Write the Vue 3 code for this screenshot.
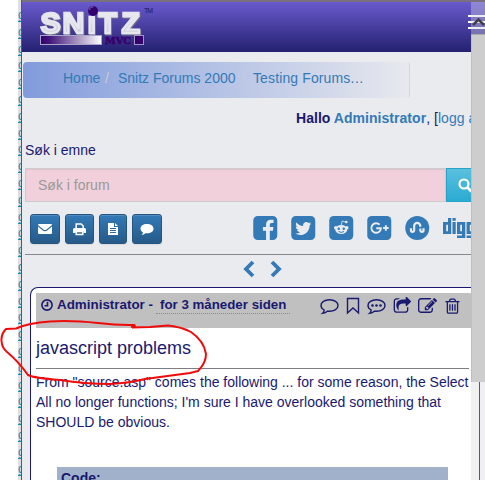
<script setup>
const gutterMarks = Array.from({ length: 29 }, (_, i) => i)
const ICON = {
  facebook: 'M1376 128q119 0 203.500 84.500t84.500 203.500v960q0 119-84.500 203.500t-203.500 84.500h-188v-595h199l30-232h-229v-148q0-56 23.500-84t91.500-28l122-1v-207q-63-9-178-9-136 0-217.500 80t-81.500 226v171h-200v232h200v595h-532q-119 0-203.500-84.500t-84.500-203.500v-960q0-119 84.500-203.500t203.500-84.500h960z',
  twitter: 'M1408 610q-56 25-121 34 68-40 93-117-65 38-134 51-61-66-153-66-87 0-148.500 61.500t-61.500 148.500q0 29 5 48-129-7-242-65t-192-155q-29 50-29 106 0 114 91 175-47-1-100-26v2q0 75 50 133.500t123 72.500q-29 8-51 8-13 0-39-4 21 63 74.500 104t121.500 42q-116 90-261 90-26 0-50-3 148 94 322 94 112 0 210-35.500t168-95 120.500-137 75-162 24.500-168.500q0-18-1-27 63-45 105-109zm256-194v960q0 119-84.500 203.500t-203.500 84.500h-960q-119 0-203.500-84.500t-84.500-203.500v-960q0-119 84.500-203.500t203.500-84.500h960q119 0 203.500 84.500t84.500 203.500z',
  share: 'M1472 989v259q0 119-84.500 203.500t-203.500 84.500h-832q-119 0-203.500-84.500t-84.500-203.500v-832q0-119 84.500-203.500t203.500-84.500h255q13 0 22.500 9.500t9.500 22.500q0 27-26 32-77 26-133 60-10 4-16 4h-112q-66 0-113 47t-47 113v832q0 66 47 113t113 47h832q66 0 113-47t47-113v-214q0-19 18-29 28-13 54-37 16-16 35-8 21 9 21 29zm237-496l-384 384q-18 19-45 19-12 0-25-5-39-17-39-59v-192h-160q-323 0-438 131-119 137-74 473 3 23-20 34-8 2-12 2-16 0-26-13-10-14-21-31t-39.500-68.500-49.500-99.500-38.500-114-17.500-122q0-49 3.500-91t14-90 28-88 47-81.500 68.500-74 94.500-61.500 124.500-48.500 159.500-30.500 196.500-11h160v-192q0-42 39-59 13-5 25-5 26 0 45 19l384 384q19 19 19 45t-19 45z',
  edit: 'M888 1184l116-116-152-152-116 116v56h96v96h56zm440-720q-16-16-33 1l-350 350q-17 17-1 33t33-1l350-350q17-17 1-33zm80 594v190q0 119-84.500 203.500t-203.500 84.500h-832q-119 0-203.500-84.500t-84.500-203.500v-832q0-119 84.500-203.500t203.500-84.500h832q63 0 117 25 15 7 18 23 3 17-9 29l-49 49q-14 14-32 8-23-6-45-6h-832q-66 0-113 47t-47 113v832q0 66 47 113t113 47h832q66 0 113-47t47-113v-126q0-13 9-22l64-64q15-15 35-7t20 29zm-96-738l288 288-672 672h-288v-288zm444 132l-92 92-288-288 92-92q28-28 68-28t68 28l152 152q28 28 28 68t-28 68z',
  trash: 'M704 736v576q0 14-9 23t-23 9h-64q-14 0-23-9t-9-23v-576q0-14 9-23t23-9h64q14 0 23 9t9 23zm256 0v576q0 14-9 23t-23 9h-64q-14 0-23-9t-9-23v-576q0-14 9-23t23-9h64q14 0 23 9t9 23zm256 0v576q0 14-9 23t-23 9h-64q-14 0-23-9t-9-23v-576q0-14 9-23t23-9h64q14 0 23 9t9 23zm128 724v-948h-896v948q0 22 7 40.500t14.500 27 10.500 8.500h832q3 0 10.500-8.500t14.500-27 7-40.500zm-672-1076h448l-48-117q-7-9-17-11h-317q-10 2-17 11zm928 32v64q0 14-9 23t-23 9h-96v948q0 83-47 143.500t-113 60.500h-832q-66 0-113-58.500t-47-141.500v-952h-96q-14 0-23-9t-9-23v-64q0-14 9-23t23-9h309l70-167q15-37 54-63t79-26h320q40 0 79 26t54 63l70 167h309q14 0 23 9t9 23z'
}
</script>

<template>
  <div class="screen">
    <div class="gutter"><span v-for="n in gutterMarks" :key="n">g</span></div>

    <main class="page">
      <header class="banner">
        <svg class="logo" width="120" height="44" viewBox="0 0 120 44">
          <defs>
            <linearGradient id="silver" x1="0" y1="0" x2="0" y2="1">
              <stop offset="0" stop-color="#fff" /><stop offset=".55" stop-color="#dcdce4" /><stop offset="1" stop-color="#c4c4cf" />
            </linearGradient>
            <linearGradient id="bar"><stop offset="0" stop-color="#33006b" /><stop offset=".15" stop-color="#42177a" /><stop offset="1" stop-color="#fff" /></linearGradient>
            <filter id="drop" x="-10%" y="-10%" width="120%" height="130%"><feDropShadow dx="1" dy="1.200" stdDeviation=".3" flood-color="#6f6c85" /></filter>
          </defs>
          <text class="logo-word" x="1.500 23.500 48.500 59.500 82.500" y="30.500" fill="url(#silver)" filter="url(#drop)">SNıTZ</text>
          <circle cx="54" cy="9" r="5" fill="#34006b" />
          <path d="M50.500 8a3.500 3.500 0 0 1 4-3" fill="none" stroke="#8573b5" stroke-width="1" />
          <rect x="1.500" y="33.500" width="61" height="9" fill="url(#bar)" stroke="#aaa3c9" />
          <text x="66" y="42" textLength="26" lengthAdjust="spacingAndGlyphs" class="logo-mvc">MVC</text>
          <rect x="95.500" y="33.500" width="9" height="9" fill="#36006b" stroke="#9d96c1" />
          <text x="105" y="11" textLength="9" class="logo-tm">TM</text>
        </svg>
        <div class="burger"><i></i><i></i><i></i></div>
      </header>

      <nav class="crumbs">
        <a class="c1">Home</a><span class="s1">/</span><a class="c2">Snitz Forums 2000</a><span class="s2">/</span><a class="c3">Testing Forums</a><span class="dots">...</span>
      </nav>

      <p class="hello"><b>Hallo <a>Administrator</a></b>, [<a>logg av</a>]</p>
      <label class="label">Søk i emne</label>
      <div class="search">
        <div class="field">Søk i forum</div>
        <button class="go">
          <svg width="15" height="15" viewBox="0 0 15 15" fill="none" stroke="#fff"><circle cx="6" cy="6" r="4.500" stroke-width="2.200" /><path d="M9.500 9.500l4 4" stroke-width="2.800" /></svg>
        </button>
      </div>

      <div class="tools">
        <button class="tool w30">
          <svg width="14" height="14" viewBox="0 0 14 14" fill="#fff"><path d="M1 2h12q1 0 1 1L8.500 7.500Q7 8.700 5.500 7.500L0 3q0-1 1-1zM0 4.600L4.500 8.300Q7 10 9.500 8.300L14 4.600V11q0 1-1 1H1q-1 0-1-1z" /></svg>
        </button>
        <button class="tool w29">
          <svg width="13" height="14" viewBox="0 0 13 14"><path d="M3.200 7V2h5l2 2v3" fill="none" stroke="#fff" stroke-width="1.500" /><path d="M1.500 6h10Q13 6 13 7.500V11h-2.500V9.500h-8V11H0V7.500Q0 6 1.500 6z" fill="#fff" /><path d="M3.200 9.500h6.600v3H3.200z" fill="none" stroke="#fff" stroke-width="1.500" /></svg>
        </button>
        <button class="tool w28">
          <svg width="12" height="14" viewBox="0 0 12 14"><path d="M1 1h6v4h4v8H1z" fill="#fff" /><path d="M8 1l3 3H8z" fill="#fff" /><path d="M3 6.500h6M3 8.500h6M3 10.500h6" stroke="#2d6ba4" /></svg>
        </button>
        <button class="tool w30">
          <svg width="14" height="14" viewBox="0 0 14 14"><path d="M7 2c3.900 0 6.500 2 6.500 4.700S10.900 11.300 7 11.300q-.8 0-1.500-.1Q3.500 13 1.500 13 3 11.800 2.900 10.300 .5 9 .5 6.700C.5 4 3.100 2 7 2z" fill="#fff" /></svg>
        </button>
        <div class="social">
          <svg viewBox="128 128 1536 1536"><path :d="ICON.facebook" /></svg>
          <svg viewBox="128 128 1536 1536"><path :d="ICON.twitter" /></svg>
          <svg viewBox="0 0 24 24"><rect width="24" height="24" rx="4.500" /><g fill="#e9ebef"><ellipse cx="12" cy="13.500" rx="6" ry="4.500" /><circle cx="6.400" cy="11.700" r="1.700" /><circle cx="17.600" cy="11.700" r="1.700" /><circle cx="17" cy="6" r="1.300" /></g><path d="M12 9l1-4 3 1" fill="none" stroke="#e9ebef" stroke-width=".8" /><circle cx="9.500" cy="12.700" r="1.200" /><circle cx="14.500" cy="12.700" r="1.200" /><path d="M9.300 15.500q2.700 1.800 5.400 0" fill="none" stroke="#347ab7" /></svg>
          <svg viewBox="0 0 24 24"><rect width="24" height="24" rx="4.500" /><path d="M12.400 8.700A4.800 4.800 0 1 0 13.700 12.300H9M15.800 12h5.600M18.600 9.200v5.600" fill="none" stroke="#e9ebef" stroke-width="1.900" /></svg>
          <svg viewBox="0 0 24 24"><circle cx="12" cy="12" r="12" /><path d="M5.700 12.300v2a1.600 1.600 0 0 0 3.200 0V10a3 3 0 0 1 6.100 0v.8M15.100 12.500v1.800a1.600 1.600 0 0 0 3.200 0v-2" fill="none" stroke="#e9ebef" stroke-width="2.200" /></svg>
          <svg class="digg" viewBox="0 0 32 24"><path fill-rule="evenodd" d="M5 2h3.200v16H0V6h5zM3.200 8.700v6.500H5V8.700zM9.500 2h3.200v2.700H9.500zM9.500 6h3.200v12H9.500zM14 6h8.300v16H14v-2.600h5V18h-5zM17.200 8.700v6.500H19V8.700zM23.600 6h8.300v16h-8.300v-2.600h5V18h-5zM26.800 8.700v6.500h1.800V8.700z" /></svg>
        </div>
      </div>

      <div class="pager">
        <svg width="12" height="18" viewBox="0 0 12 18"><path d="M10 2L3 9l7 7" /></svg>
        <svg width="12" height="18" viewBox="0 0 12 18"><path d="M2 2l7 7-7 7" /></svg>
      </div>

      <article class="post">
        <div class="post-head">
          <svg class="clock" width="12" height="12" viewBox="0 0 12 12"><circle cx="6" cy="6" r="5.100" /><path d="M6.500 2.700v4H3.500" /></svg>
          <b class="author">Administrator -</b><b class="ago">for 3 måneder siden</b>
          <div class="actions">
            <svg width="19" height="18" viewBox="0 0 19 18"><path class="line" d="M9.500 2.800c4.800 0 8.500 2.500 8.500 5.700s-3.700 5.700-8.500 5.700q-1 0-1.800-.1-2.200 2-5.200 2.300 1.700-1.500 1.700-3.400Q1 11.300 1 8.500c0-3.200 3.700-5.700 8.500-5.700z" /></svg>
            <svg width="14" height="18" viewBox="0 0 14 18"><path class="line" d="M1.500 1.500h11v14.500l-5.500-5L1.500 16z" /></svg>
            <svg width="19" height="18" viewBox="0 0 19 18"><path class="line" d="M9.500 2.800c4.800 0 8.500 2.500 8.500 5.700s-3.700 5.700-8.500 5.700q-1 0-1.800-.1-2.200 2-5.200 2.300 1.700-1.500 1.700-3.400Q1 11.300 1 8.500c0-3.200 3.700-5.700 8.500-5.700z" /><circle cx="5.500" cy="8.500" r="1.300" /><circle cx="9.500" cy="8.500" r="1.300" /><circle cx="13.500" cy="8.500" r="1.300" /></svg>
            <svg width="18" height="18" viewBox="0 80 1728 1600"><path :d="ICON.share" /></svg>
            <svg width="19" height="18" viewBox="0 80 1792 1600"><path :d="ICON.edit" /></svg>
            <svg width="17" height="18" viewBox="50 80 1700 1600"><path :d="ICON.trash" /></svg>
          </div>
        </div>
        <h2>javascript problems</h2>
        <div class="body">
          <div class="l1">From "source.asp" comes the following ... for some reason, the Select</div>
          <div>All no longer functions; I'm sure I have overlooked something that</div>
          <div>SHOULD be obvious.</div>
        </div>
        <div class="code">Code:</div>
      </article>
    </main>

    <div class="scroll">
      <div class="up"><svg width="14" height="12" viewBox="0 0 14 12"><path d="M2 9l5.500-5.500L13 9" /></svg></div>
      <div class="thumb"></div>
      <div class="track"></div>
    </div>

    <svg class="scribble" width="220" height="80" viewBox="0 310 220 80">
      <path d="M131 326.500L135 327.500 134.500 325Q118 325.500 98 323Q70 320 50 321.500Q28 323 16 328.500L6 329Q1 334 1.500 341Q2 348 7 352Q18 361 28 375Q34 378 60 380Q85 384 110 384Q130 383 145 379L190 373L198 371Q206 363 206 354Q204 341 191 332Q182 327 168 325.500L150 327L132 327.500" />
    </svg>
  </div>
</template>

<style>
body { margin: 0; overflow: hidden; }
</style>
<style scoped>
* { box-sizing: border-box; }
.screen { position: relative; display: flex; width: 485px; height: 480px; overflow: hidden; background: #fff; color: #191970; font: 14px/20px "Liberation Sans", Arial, sans-serif; }
a { color: #337ab7; }
svg { display: block; flex: none; }
button { padding: 0; margin: 0; display: flex; align-items: center; justify-content: center; }
.gutter { width: 22px; flex: none; padding: 7px 0 0 18px; overflow: hidden; border-right: 1px solid #8c32a0; background: linear-gradient(90deg, #fff 18px, #dfdfe1 18px); }
.gutter span { display: block; width: 8px; height: 16.800px; line-height: 16px; font-size: 12px; color: #168bb2; text-decoration: underline; text-decoration-skip-ink: none; text-underline-offset: 2px; }
.page { width: 463px; height: 480px; flex: none; display: flex; flex-direction: column; background: #e9ebef; overflow: hidden; }
.banner { height: 52px; flex: none; display: flex; justify-content: space-between; border-top: 2px solid #77727e; background: linear-gradient(#6a5acd, #242170); }
.logo { margin: 0 0 0 17px; overflow: visible; }
.logo-word { font: bold 30px "Liberation Sans", sans-serif; stroke: #e6e6ee; stroke-width: 2.400px; }
.logo-mvc { font: bold 10px "DejaVu Serif", serif; fill: #39006d; stroke: #39006d; stroke-width: .5px; }
.logo-tm { font: 7px "Liberation Sans", sans-serif; fill: #211b4c; }
.burger { display: flex; flex-direction: column; gap: 4px; padding-top: 13px; width: 17px; }
.burger i { height: 2px; background: #fff; }
.crumbs { margin: 10px 0 0 1px; width: 387px; height: 36px; flex: none; padding: 6px 0 0 40px; border-radius: 4px; border-right: 1px solid #d5d6e5; background: linear-gradient(90deg, #819bdc, #e8e9ee); display: flex; white-space: nowrap; }
.crumbs span { color: #ccc; }
.c1 { width: 42px; } .s1 { width: 13px; } .c2 { width: 123px; } .s2 { width: 12px; opacity: .5; }
.c3 { letter-spacing: .12px; }
.crumbs .dots { color: #337ab7; letter-spacing: .6px; }
.hello { margin: 10px 0 0 274px; height: 20px; flex: none; white-space: nowrap; letter-spacing: .04px; }
.label { margin: 12px 0 0 3px; height: 20px; flex: none; }
.search { margin: 8px 0 0 3px; height: 34px; flex: none; display: flex; }
.field { width: 421px; border: 1px solid #ccc; box-shadow: inset 0 1px 1px rgba(0,0,0,.075); background: #f2d0db; padding: 6px 12px; color: #999; }
.go { width: 39px; border: 1px solid #28a4c9; background: linear-gradient(#5bc0de, #2aabd2); }
.tools { margin: 12px 0 0 3px; width: 460px; height: 41px; flex: none; border-bottom: 1px solid #87888d; display: flex; align-items: flex-start; padding-left: 5px; gap: 5px; }
.tool { height: 30px; border: 1px solid #245580; border-radius: 3px; background: linear-gradient(#337ab7, #265a88); box-shadow: inset 0 1px 0 rgba(255,255,255,.15), 0 1px 1px rgba(0,0,0,.075); }
.w30 { width: 30px; } .w29 { width: 29px; } .w28 { width: 28px; }
.social { display: flex; gap: 13.500px; margin-left: 86px; padding-top: 2px; fill: #347ab7; }
.social svg { width: 24.500px; height: 24px; }
.social .digg { width: 32px; }
.pager { margin: 5px 0 0 221px; height: 18px; flex: none; display: flex; gap: 15px; fill: none; stroke: #337ab7; stroke-width: 3.800; }
.post { margin: 9px 0 0 8px; width: 450px; height: 220px; flex: none; border: 1px solid #191970; border-bottom: 0; border-radius: 8px 8px 0 0; background: #fff; padding: 5px 6px 0 5px; }
.post-head { height: 35px; background: #c0c0c0; border-radius: 0 4px 0 0; display: flex; padding: 2px 0 0 5px; }
.clock { margin-top: 4px; fill: none; stroke: #191970; stroke-width: 1.600; }
.author { margin-left: 4px; width: 99px; white-space: nowrap; font-size: 13.400px; }
.ago { height: 19px; padding: 0 4px; width: 134px; white-space: nowrap; border-bottom: 1px dotted #888; font-size: 13.300px; }
.actions { display: flex; gap: 7px; margin: 2px 0 0 30px; fill: #191970; }
.line { fill: none; stroke: #191970; stroke-width: 1.400; }
h2 { margin: 0; width: 433px; height: 41px; padding-top: 10px; border-bottom: 1px solid #7d7d83; font-size: 18px; line-height: 20px; font-weight: 400; }
.body { padding-top: 3px; white-space: nowrap; }
.code { margin: 35px 0 0 21px; width: 391px; height: 40px; padding: 1px 4px; background: #a1b1cb; font-weight: 700; }
.scroll { position: absolute; left: 471px; top: 2px; width: 14px; height: 478px; display: flex; flex-direction: column; }
.up { height: 33px; padding-top: 14px; background: rgba(205,205,225,.4); border-bottom: 1px solid #aaa; }
.up svg { fill: none; stroke: #404048; stroke-width: 2.500; }
.thumb { height: 347px; background: #cdcdcd; border-left: 1px solid #bfbfc3; }
.track { flex: 1; background: linear-gradient(90deg, #f0f0f0 8px, #55558e 8px, #55558e 9px, #f0f0f4 9px); }
.scribble { position: absolute; left: 0; top: 310px; overflow: visible; fill: none; stroke: #f00b0b; stroke-width: 2; stroke-linejoin: round; }
</style>
